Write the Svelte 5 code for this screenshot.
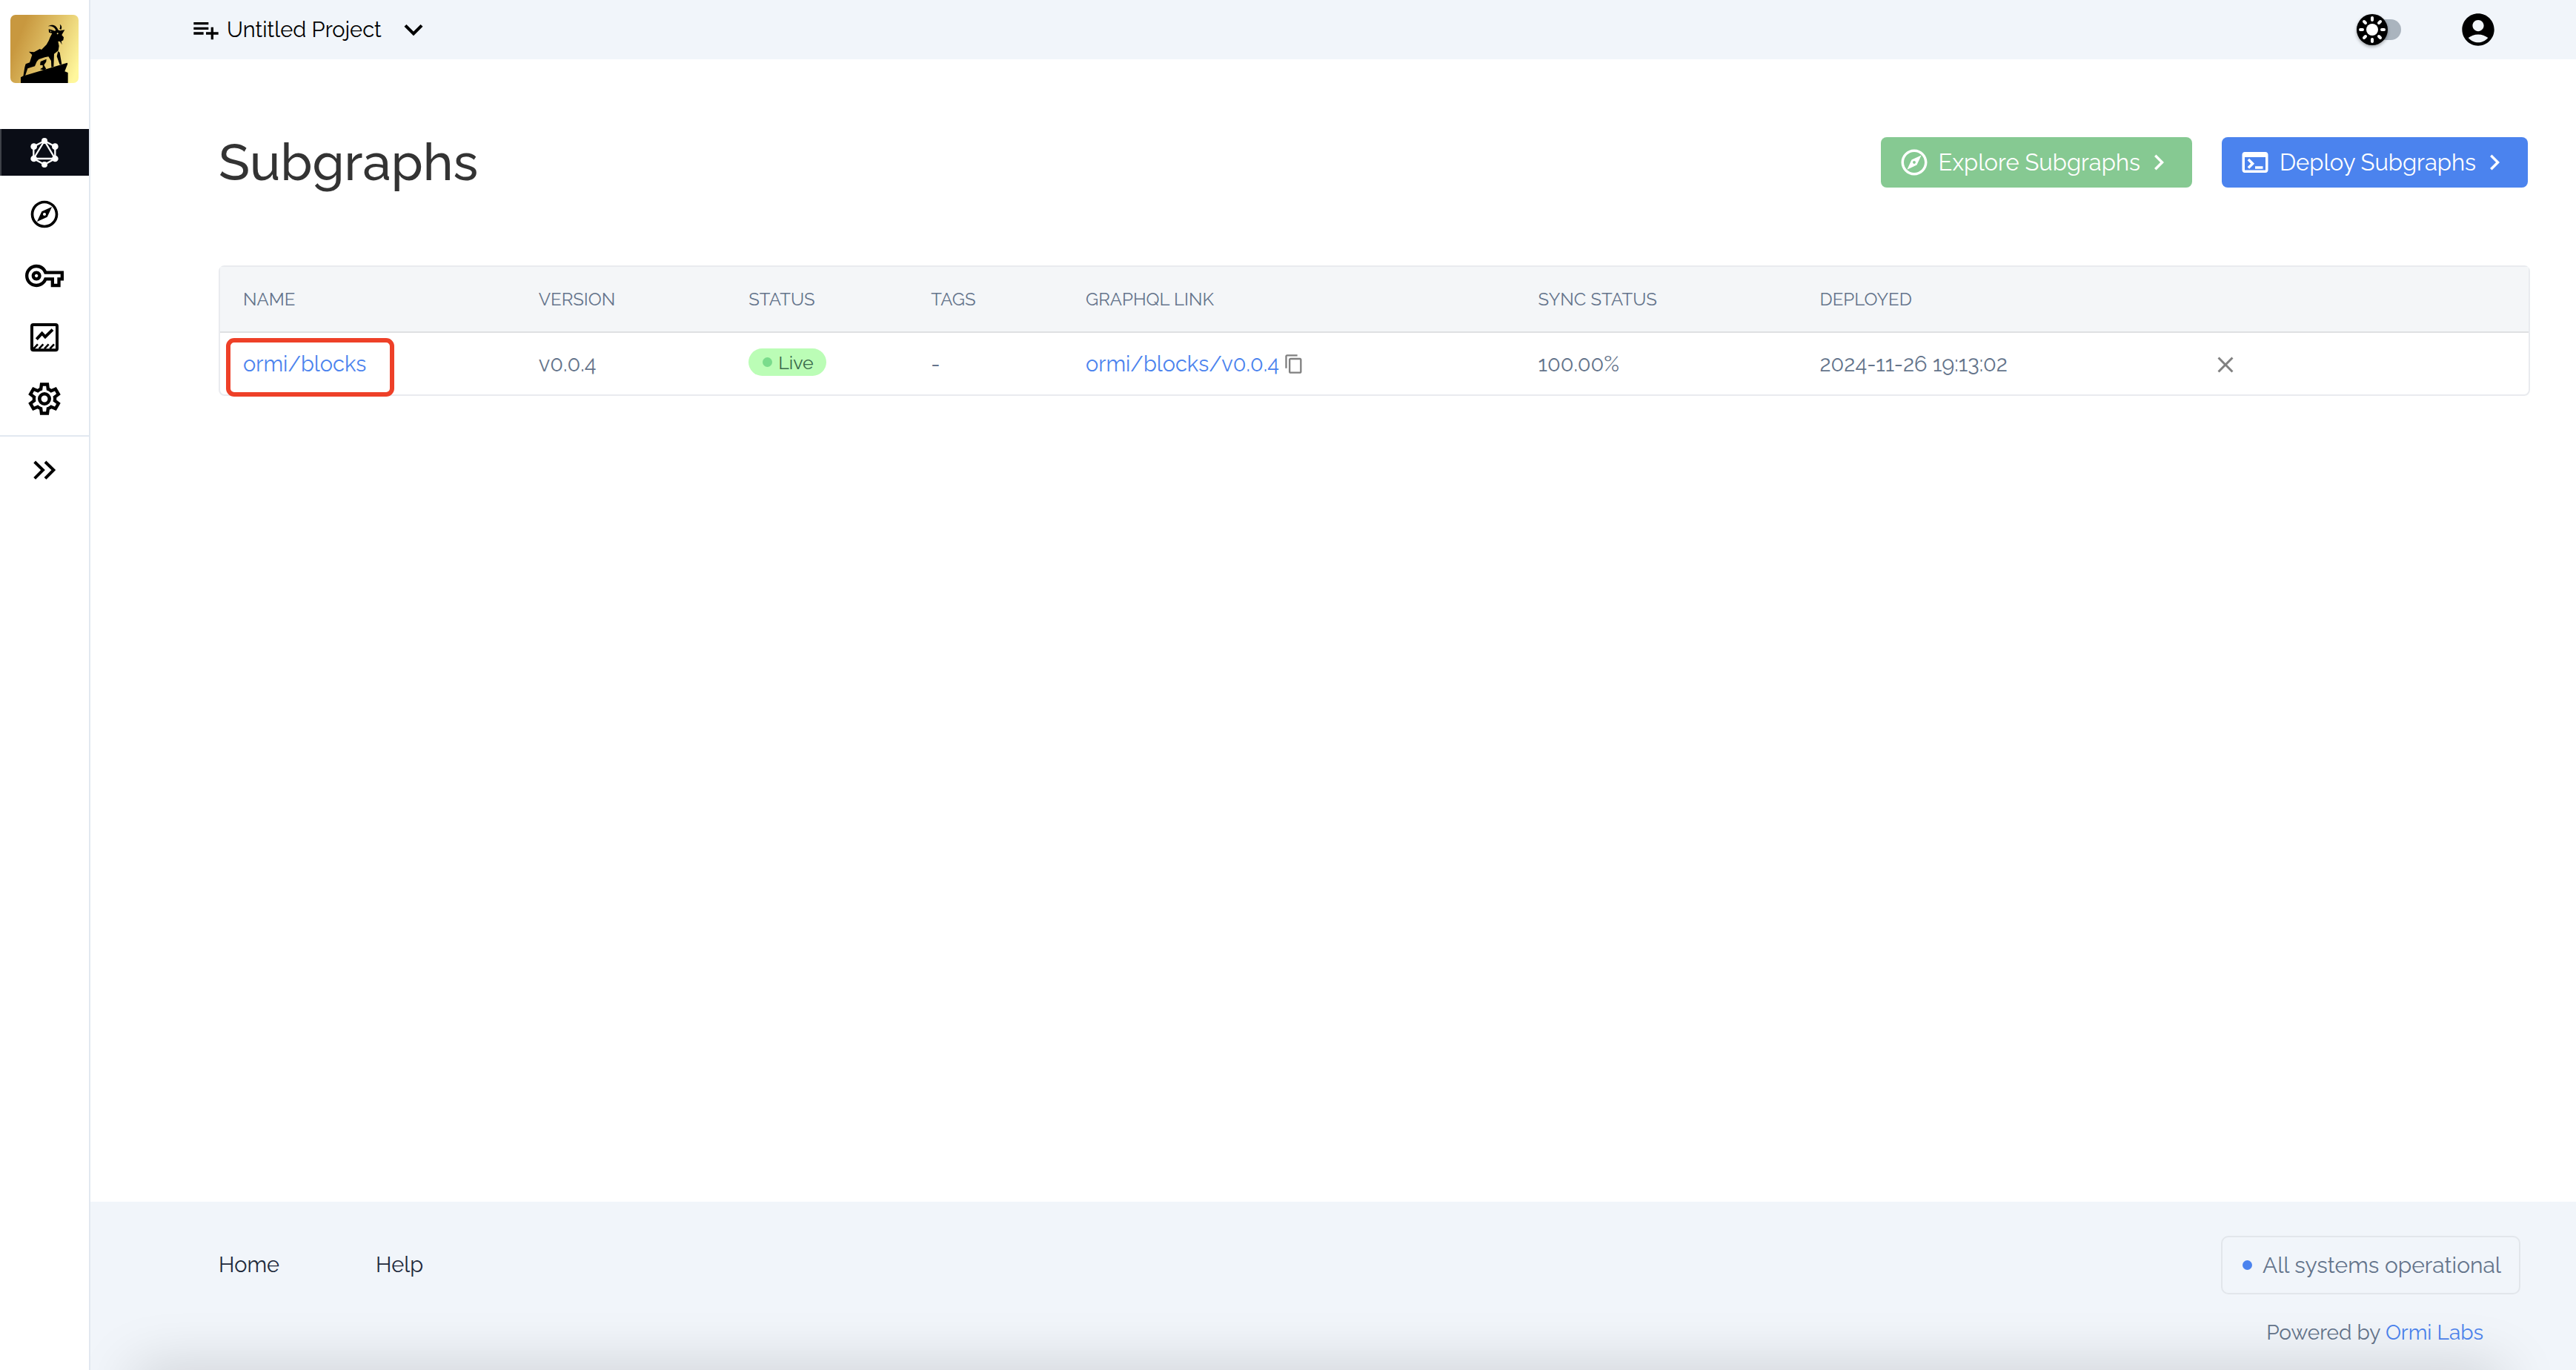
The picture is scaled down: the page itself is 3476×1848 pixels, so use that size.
<script lang="ts">
	interface Subgraph {
		name: string;
		version: string;
		status: string;
		tags: string;
		link: string;
		sync: string;
		deployed: string;
	}

	const columns = ['Name', 'Version', 'Status', 'Tags', 'GraphQL Link', 'Sync Status', 'Deployed', ''];

	let subgraphs: Subgraph[] = $state([
		{
			name: 'ormi/blocks',
			version: 'v0.0.4',
			status: 'Live',
			tags: '-',
			link: 'ormi/blocks/v0.0.4',
			sync: '100.00%',
			deployed: '2024-11-26 19:13:02'
		}
	]);

	let dark = $state(false);

	const explorePath =
		'M12 2C6.48 2 2 6.48 2 12s4.48 10 10 10 10-4.48 10-10S17.52 2 12 2zm0 18c-4.41 0-8-3.59-8-8s3.59-8 8-8 8 3.59 8 8-3.59 8-8 8zm-5.5-2.5l7.51-3.49L17.5 6.5 9.99 9.99 6.5 17.5zm5.5-6.6c.61 0 1.1.49 1.1 1.1s-.49 1.1-1.1 1.1-1.1-.49-1.1-1.1.49-1.1 1.1-1.1z';
	const chevronPath = 'M10 6 8.59 7.41 13.17 12l-4.58 4.59L10 18l6-6z';

	function copyLink(link: string) {
		navigator.clipboard?.writeText(link);
	}

	function remove(name: string) {
		subgraphs = subgraphs.filter((s) => s.name !== name);
	}
</script>

<div class="app">
	<aside class="sidebar">
		<a class="logo" href="#home" aria-label="Ormi home">
			<svg viewBox="42 60 276 276">
				<defs>
					<linearGradient id="gold" x1="0" y1="0.35" x2="1" y2="0.75">
						<stop offset="0.1" stop-color="#c8983f" />
						<stop offset="0.5" stop-color="#dfbf65" />
						<stop offset="1" stop-color="#fff79c" />
					</linearGradient>
				</defs>
				<rect x="42" y="60" width="276" height="276" fill="url(#gold)" />
				<path d="M84 336V313L92 308 272 254 274 258 262 289 275 294V336z" />
				<path
					d="M94 309 100 272 104 259 120 253 130 222 117 209 138 211 161 198 168 201 188 181 197 165 203 150 211 135 198 131 197 118 209 121 222 125 230 120 243 124 262 121 254 134 250 142 258 151 256 163 248 167 251 181 243 168 235 167 239 186 236 205 219 218 217 270 208 272 207 246 196 229 181 232 157 240 149 249 141 268 112 277 102 307z"
				/>
				<path d="M235 207 242 213 246 237 250 260 242 262 230 228z" />
				<path d="M164 249 188 239 187 250 178 263 187 279 177 284 162 280 173 273 173 264 162 263z" />
				<path d="M194 106C211 96 230 100 237 126L226 124C222 110 211 105 194 106zM242 98C250 103 252 110 247 121L241 116C245 110 244 104 242 98z" />
				<circle cx="233" cy="136" r="3" fill="#e9d27b" />
				<path d="M202 123 208 127 206 130z" fill="#e9d27b" />
			</svg>
		</a>
		<nav class="side-nav">
			<a class="side-item active" href="#subgraphs" aria-label="Subgraphs">
				<svg width="44" height="44" viewBox="114 69 132 132" fill="none" stroke="currentColor" stroke-width="7">
					<path d="M180 87 223 110V159L180 183 136 159V110zM180 87 136 159H223z" />
					<g fill="currentColor" stroke="none">
						<circle cx="180" cy="87" r="12" />
						<circle cx="223" cy="110" r="13" />
						<circle cx="223" cy="159" r="13" />
						<circle cx="180" cy="183" r="12" />
						<circle cx="137" cy="159" r="13" />
						<circle cx="137" cy="110" r="13" />
					</g>
				</svg>
			</a>
			<a class="side-item" href="#explore" aria-label="Explore">
				<svg width="44" height="44" viewBox="0 0 24 24"><path d={explorePath} /></svg>
			</a>
			<a class="side-item" href="#keys" aria-label="API keys">
				<svg width="52" height="52" viewBox="0 0 24 24">
					<path
						d="M22 19h-6v-4h-2.68c-1.14 2.42-3.6 4-6.32 4-3.86 0-7-3.14-7-7s3.14-7 7-7c2.72 0 5.17 1.58 6.32 4H24v6h-2v4zm-4-2h2v-4h2v-2H11.94l-.23-.67C11.01 8.34 9.11 7 7 7c-2.76 0-5 2.24-5 5s2.24 5 5 5c2.11 0 4.01-1.34 4.71-3.33l.23-.67H18v4zM7 15c-1.65 0-3-1.35-3-3s1.35-3 3-3 3 1.35 3 3-1.35 3-3 3zm0-4c-.55 0-1 .45-1 1s.45 1 1 1 1-.45 1-1-.45-1-1-1z"
					/>
				</svg>
			</a>
			<a class="side-item" href="#usage" aria-label="Usage">
				<svg width="44" height="44" viewBox="114 820 132 132" fill="none" stroke="currentColor" stroke-width="12">
					<rect x="129" y="835" width="102" height="103" rx="6" />
					<path d="M148 894 170 870 183 884 213 855" />
					<path d="M136 932 153 914M158 932 175 914M180 932 197 914M202 932 219 914" stroke-width="8" />
				</svg>
			</a>
			<a class="side-item" href="#settings" aria-label="Settings">
				<svg width="52" height="52" viewBox="0 0 24 24">
					<path
						d="m9.25 22-.4-3.2q-.325-.125-.612-.3-.288-.175-.563-.375L4.7 19.375l-2.75-4.75 2.575-1.95Q4.5 12.5 4.5 12.337v-.675q0-.162.025-.337L1.95 9.375l2.75-4.75 2.975 1.25q.275-.2.575-.375.3-.175.6-.3l.4-3.2h5.5l.4 3.2q.325.125.613.3.287.175.562.375l2.975-1.25 2.75 4.75-2.575 1.95q.025.175.025.337v.675q0 .163-.05.338l2.575 1.95-2.75 4.75-2.95-1.25q-.275.2-.575.375-.3.175-.6.3l-.4 3.2Zm1.75-2h1.975l.35-2.65q.775-.2 1.438-.588.662-.387 1.212-.937l2.475 1.025.975-1.7-2.15-1.625q.125-.35.175-.738.05-.387.05-.787t-.05-.788q-.05-.387-.175-.737l2.15-1.625-.975-1.7-2.475 1.05q-.55-.575-1.212-.963-.663-.387-1.438-.587L13 4h-1.975l-.35 2.65q-.775.2-1.437.587-.663.388-1.213.938L5.55 7.15l-.975 1.7 2.15 1.6q-.125.375-.175.75-.05.375-.05.8 0 .4.05.775t.175.75l-2.15 1.625.975 1.7 2.475-1.05q.55.575 1.213.963.662.387 1.437.587Z"
					/>
					<circle cx="12" cy="12" r="3.1" fill="none" stroke="currentColor" stroke-width="2.1" />
				</svg>
			</a>
		</nav>
		<button class="expand" type="button" aria-label="Expand sidebar">
			<svg width="44" height="44" viewBox="114 1357 132 132" fill="none" stroke="currentColor" stroke-width="12">
				<path d="M140 1390 174 1423 140 1457M183 1390 217 1423 183 1457" />
			</svg>
		</button>
	</aside>

	<div class="page">
		<header class="topbar">
			<button class="project" type="button">
				<svg width="40" height="40" viewBox="0 0 24 24">
					<path d="M14 10H2v2h12v-2zm0-4H2v2h12V6zm4 8v-4h-2v4h-4v2h4v4h2v-4h4v-2h-4zM2 16h8v-2H2v2z" />
				</svg>
				<span class="project-name">Untitled Project</span>
				<svg width="50" height="50" viewBox="0 0 24 24">
					<path d="M16.59 8.59 12 13.17 7.41 8.59 6 10l6 6 6-6z" />
				</svg>
			</button>
			<div class="top-actions">
				<label class="toggle" class:dark>
					<input type="checkbox" bind:checked={dark} aria-label="Dark mode" />
					<span class="thumb">
						<svg width="42" height="42" viewBox="-21 -21 42 42">
							<circle r="8" fill="#fff" />
							<g stroke="#fff" stroke-width="4" stroke-linecap="round">
								<path d="M0-16V-13M0 13V16M-16 0H-13M13 0H16M-11-11-9-9M9 9 11 11M-11 11-9 9M9-9 11-11" />
							</g>
						</svg>
					</span>
				</label>
				<button class="icon-button" type="button" aria-label="Account">
					<svg width="52" height="52" viewBox="0 0 24 24">
						<path
							d="M12 2C6.48 2 2 6.48 2 12s4.48 10 10 10 10-4.48 10-10S17.52 2 12 2zm0 4c1.93 0 3.5 1.57 3.5 3.5S13.93 13 12 13s-3.5-1.57-3.5-3.5S10.07 6 12 6zm0 14c-2.03 0-4.43-.82-6.14-2.88C7.55 15.8 9.68 15 12 15s4.45.8 6.14 2.12C16.43 19.18 14.03 20 12 20z"
						/>
					</svg>
				</button>
			</div>
		</header>

		<main class="content">
			<div class="heading">
				<h1>Subgraphs</h1>
				<div class="actions">
					<button class="action explore" type="button">
						<svg width="42" height="42" viewBox="0 0 24 24"><path d={explorePath} /></svg>
						<span>Explore Subgraphs</span>
						<svg width="42" height="42" viewBox="0 0 24 24"><path d={chevronPath} /></svg>
					</button>
					<button class="action deploy" type="button">
						<svg width="42" height="42" viewBox="0 0 24 24">
							<path
								d="M20 4H4c-1.11 0-2 .9-2 2v12c0 1.1.89 2 2 2h16c1.1 0 2-.9 2-2V6c0-1.1-.89-2-2-2zm0 14H4V8h16v10zm-2-1h-6v-2h6v2zM7.5 17l-1.41-1.41L8.67 13l-2.59-2.59L7.5 9l4 4-4 4z"
							/>
						</svg>
						<span>Deploy Subgraphs</span>
						<svg width="42" height="42" viewBox="0 0 24 24"><path d={chevronPath} /></svg>
					</button>
				</div>
			</div>

			<div class="table-wrap">
				<table>
					<colgroup>
						<col class="col-name" />
						<col class="col-version" />
						<col class="col-status" />
						<col class="col-tags" />
						<col class="col-link" />
						<col class="col-sync" />
						<col class="col-deployed" />
						<col />
					</colgroup>
					<thead>
						<tr>
							{#each columns as column}
								<th scope="col">{column}</th>
							{/each}
						</tr>
					</thead>
					<tbody>
						{#each subgraphs as s (s.name)}
							<tr>
								<td class="name-cell"><a href="#{s.name}">{s.name}</a></td>
								<td>{s.version}</td>
								<td><span class="badge"><span class="badge-dot"></span>{s.status}</span></td>
								<td>{s.tags}</td>
								<td>
									<span class="link-cell">
										<a href="#{s.link}">{s.link}</a>
										<button class="icon-button muted" type="button" aria-label="Copy link" onclick={() => copyLink(s.link)}>
											<svg width="28" height="28" viewBox="0 0 24 24">
												<path
													d="M16 1H4c-1.1 0-2 .9-2 2v14h2V3h12V1zm3 4H8c-1.1 0-2 .9-2 2v14c0 1.1.9 2 2 2h11c1.1 0 2-.9 2-2V7c0-1.1-.9-2-2-2zm0 16H8V7h11v14z"
												/>
											</svg>
										</button>
									</span>
								</td>
								<td>{s.sync}</td>
								<td>{s.deployed}</td>
								<td>
									<button class="icon-button muted" type="button" aria-label="Remove subgraph" onclick={() => remove(s.name)}>
										<svg width="36" height="36" viewBox="0 0 24 24">
											<path d="M19 6.41 17.59 5 12 10.59 6.41 5 5 6.41 10.59 12 5 17.59 6.41 19 12 13.41 17.59 19 19 17.59 13.41 12z" />
										</svg>
									</button>
								</td>
							</tr>
						{/each}
					</tbody>
				</table>
			</div>
		</main>

		<footer class="footer">
			<nav class="footer-nav">
				<a href="#home">Home</a>
				<a href="#help">Help</a>
			</nav>
			<div class="footer-side">
				<a class="system-status" href="#status"><span class="status-dot"></span>All systems operational</a>
				<p class="powered">Powered by <a href="#ormi">Ormi Labs</a></p>
			</div>
		</footer>
	</div>
</div>

<style>
	:global(body) {
		margin: 0;
		background: #fff;
	}

	.app {
		display: flex;
		min-height: 100vh;
		font-family: Raleway, Lato, sans-serif;
		font-size: 29px;
		line-height: 36px;
		color: #000;
	}

	svg {
		display: block;
		flex-shrink: 0;
		fill: currentColor;
	}

	svg[fill='none'] {
		fill: none;
	}

	a {
		color: #4b83ee;
		text-decoration: none;
	}

	button {
		padding: 0;
		border: none;
		background: none;
		color: inherit;
		font: inherit;
		cursor: pointer;
	}

	.sidebar {
		display: flex;
		flex-direction: column;
		flex-shrink: 0;
		width: 120px;
		border-right: 2px solid #e2e8f0;
	}

	.logo {
		width: 92px;
		height: 92px;
		margin: 20px auto 62px;
		border-radius: 7px;
		overflow: hidden;
		color: #000;
	}

	.side-nav {
		display: flex;
		flex-direction: column;
		gap: 20px;
		padding-bottom: 18px;
		border-bottom: 2px solid #e2e8f0;
	}

	.side-item {
		display: flex;
		align-items: center;
		justify-content: center;
		height: 63px;
		color: #000;
	}

	.side-item.active {
		background: #0a0d16;
		border-left: 2px solid #3e4148;
		padding-right: 2px;
		color: #fff;
	}

	.expand {
		display: flex;
		align-items: center;
		justify-content: center;
		height: 90px;
	}

	.page {
		display: flex;
		flex-direction: column;
		flex: 1;
		min-width: 0;
	}

	.topbar {
		display: flex;
		align-items: center;
		justify-content: space-between;
		height: 80px;
		padding: 0 106px 0 136px;
		background: #f1f5fa;
	}

	.project {
		display: flex;
		align-items: center;
	}

	.project-name {
		padding: 0 18px 0 8px;
	}

	.top-actions {
		display: flex;
		align-items: center;
		gap: 78px;
	}

	.toggle {
		display: flex;
		align-items: center;
		width: 60px;
		height: 28px;
		border-radius: 14px;
		background: #aab4be;
		cursor: pointer;
	}

	.toggle input {
		position: absolute;
		opacity: 0;
	}

	.thumb {
		border-radius: 50%;
		background: #000;
		box-shadow: 0 2px 4px rgba(0, 0, 0, 0.35);
	}

	.toggle.dark .thumb {
		margin-left: 18px;
	}

	.content {
		flex: 1;
		padding: 96px 62px 0 173px;
	}

	.heading {
		display: flex;
		align-items: center;
		justify-content: space-between;
		margin-bottom: 96px;
	}

	h1 {
		margin: 0;
		font-size: 69px;
		font-weight: 500;
		line-height: 86px;
		color: #333;
	}

	.actions {
		display: flex;
		gap: 40px;
		padding-right: 3px;
	}

	.action {
		display: flex;
		align-items: center;
		height: 68px;
		padding: 0 24px;
		border-radius: 8px;
		color: #fff;
		font-size: 31px;
	}

	.action span {
		padding: 0 4px 0 12px;
	}

	.explore {
		background: #86c992;
	}

	.deploy {
		background: #4b83ee;
	}

	.table-wrap {
		border: 2px solid #e9ebef;
		border-radius: 8px;
	}

	table {
		width: 100%;
		border-collapse: separate;
		border-spacing: 0;
		table-layout: fixed;
		color: #64748b;
	}

	th,
	td {
		padding: 0 0 0 31px;
		text-align: left;
		font-weight: 400;
		white-space: nowrap;
	}

	th {
		height: 87px;
		border-bottom: 2px solid #dfe0e2;
		background: #f4f6f8;
		font-size: 24px;
		text-transform: uppercase;
	}

	td {
		height: 83px;
	}

	.col-name { width: 12.8%; }
	.col-version { width: 9.1%; }
	.col-status { width: 7.9%; }
	.col-tags { width: 6.7%; }
	.col-link { width: 19.6%; }
	.col-sync { width: 12.2%; }
	.col-deployed { width: 17%; }

	.name-cell {
		position: relative;
	}

	/* highlight around the subgraph name */
	.name-cell::after {
		content: '';
		position: absolute;
		left: 8px;
		top: 7px;
		width: 215px;
		height: 67px;
		border: 6px solid #ee4028;
		border-radius: 11px;
		pointer-events: none;
	}

	.badge {
		display: inline-flex;
		align-items: center;
		gap: 8px;
		height: 37px;
		margin-bottom: 4px;
		padding: 0 17px 0 19px;
		border-radius: 19px;
		background: #bbfdb6;
		color: #3b6b4c;
		font-size: 25px;
		vertical-align: middle;
	}

	.badge-dot {
		width: 13px;
		height: 13px;
		border-radius: 50%;
		background: #7adc8c;
	}

	.link-cell {
		display: flex;
		align-items: center;
		gap: 6px;
	}

	.icon-button {
		display: inline-flex;
		vertical-align: middle;
	}

	.muted {
		color: #808080;
	}

	.footer {
		display: flex;
		justify-content: space-between;
		position: relative;
		padding: 46px 75px 32px 173px;
		background: #f1f5fa;
		overflow: hidden;
	}

	/* soft shade rising from the bottom edge */
	.footer::after {
		content: '';
		position: absolute;
		left: 60px;
		right: 100px;
		top: 100%;
		height: 60px;
		box-shadow: 0 0 80px rgba(0, 0, 0, 0.18);
		pointer-events: none;
	}

	.footer-nav {
		display: flex;
		gap: 130px;
		padding-top: 21px;
	}

	.footer-nav a {
		color: #1e293b;
	}

	.footer-side {
		display: flex;
		flex-direction: column;
		gap: 34px;
	}

	.system-status {
		display: flex;
		align-items: center;
		gap: 14px;
		height: 75px;
		padding: 0 24px 0 27px;
		border: 2px solid #e2e6eb;
		border-radius: 10px;
		color: #64748b;
		font-size: 30px;
	}

	.status-dot {
		width: 13px;
		height: 13px;
		border-radius: 50%;
		background: #4b83ee;
	}

	.powered {
		margin: 0;
		padding-right: 50px;
		text-align: right;
		font-size: 28px;
		color: #64748b;
	}
</style>
